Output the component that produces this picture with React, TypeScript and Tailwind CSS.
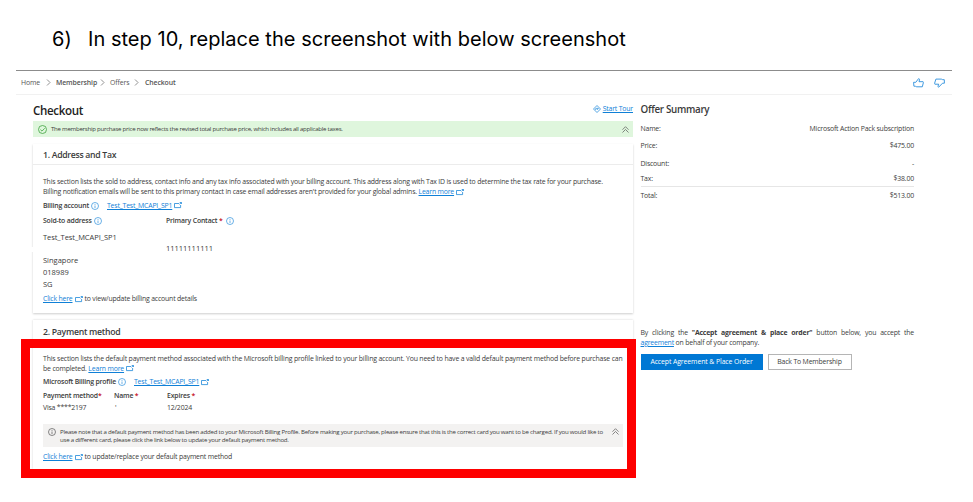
import type { ReactNode } from "react";

type Kids = { children?: ReactNode; className?: string };

function Row({ children, className = "" }: Kids) {
  return <div className={`flex items-center whitespace-nowrap ${className}`}>{children}</div>;
}

function Link({ children, className = "" }: Kids) {
  return <a className={`text-[#0f80d7] underline decoration-[0.6px] underline-offset-1 ${className}`}>{children}</a>;
}

function Chevron() {
  return (
    <svg className="h-[7px] w-[5px]" viewBox="0 0 5 7" fill="none" stroke="#777" strokeWidth="0.8">
      <path d="M1 0.5 4 3.5 1 6.5" />
    </svg>
  );
}

function DoubleUp({ className = "" }: Kids) {
  return (
    <svg className={`h-[7px] w-[7px] shrink-0 ${className}`} viewBox="0 0 7 7" fill="none" stroke="#555" strokeWidth="0.7">
      <path d="M0.5 3.7 3.5 0.7 6.5 3.7M0.5 6.5 3.5 3.5 6.5 6.5" />
    </svg>
  );
}

function Info({ className = "", stroke = "#2b8fdc" }: { className?: string; stroke?: string }) {
  return (
    <svg className={`h-2 w-2 shrink-0 ${className}`} viewBox="0 0 8 8" fill="none" stroke={stroke} strokeWidth="0.7">
      <circle cx="4" cy="4" r="3.5" />
      <path d="M4 3.5V6M4 2V2.8" />
    </svg>
  );
}

function External({ className = "" }: Kids) {
  return (
    <svg className={`inline-block h-[7px] w-2 shrink-0 ${className}`} viewBox="0 0 8 7" fill="none" stroke="#0f80d7" strokeWidth="0.75">
      <path d="M5 1.5H0.5V5.6H6.6V3M5.4 2.3 7.3 0.7M5.7 0.5H7.5V2" />
    </svg>
  );
}

function Star() {
  return <span className="text-[#c50f1f]">*</span>;
}

function SummaryRow({ label, value, className }: { label: string; value: string; className: string }) {
  return (
    <Row className={`justify-between ${className}`}>
      <span>{label}</span>
      <span>{value}</span>
    </Row>
  );
}

export default function App() {
  return (
    <div className="relative h-[502px] w-[973px] overflow-hidden bg-white font-['Open_Sans','Noto_Sans',sans-serif] text-[6.9px] leading-[10px] tracking-[-0.18px] text-[#3b3b3b]">
      <Row className="h-[70px] pt-2 pl-[52px] font-['Inter','Liberation_Sans',sans-serif] text-[20px] leading-6 tracking-[0.03px] text-black">
        <span className="w-9">6)</span>
        <span>In step 10, replace the screenshot with below screenshot</span>
      </Row>

      <div className="ml-4 w-[936px]">
        <Row className="h-[25px] justify-between border-t border-b border-t-[#8c8c8c] border-b-[#f1f1f1] pr-[7px] pl-[5px] tracking-[-0.1px] text-[#555]">
          <Row>
            <span className="w-[25px]">Home</span>
            <Chevron />
            <span className="ml-[5px] w-[44px] font-semibold">Membership</span>
            <Chevron />
            <span className="ml-[5px] w-6">Offers</span>
            <Chevron />
            <span className="ml-[6px] font-semibold">Checkout</span>
          </Row>
          <Row className="gap-2.5">
            <svg className="h-[10px] w-[11px]" viewBox="0 0 11 10" fill="none" stroke="#2b8fdc" strokeWidth="0.9" strokeLinejoin="round">
              <path d="M0.6 4.3H2.8L5.6 0.6 6.6 1.3 6 3.7H10.1L10.4 4.6 9.3 8.8H3.2L2.6 8.2H0.9Z" />
            </svg>
            <svg className="h-[10px] w-[11px]" viewBox="0 0 11 10" fill="none" stroke="#2b8fdc" strokeWidth="0.9" strokeLinejoin="round">
              <path d="M10.4 5.2H8.5L4.7 9.2 3.9 8.6 4.7 6.2H0.9L0.6 5.3 1.9 1.1H7.8L8.4 1.7H10.3Z" />
            </svg>
          </Row>
        </Row>
      </div>

      <div className="flex pl-[33px]">
        <main className="w-[600px]">
          <Row className="h-[26px] justify-between pt-1">
            <h1 className="pt-0.5 text-[11.6px] font-semibold tracking-[-0.36px] text-[#222]">Checkout</h1>
            <Row className="-mt-0.5 gap-[2px]">
              <svg className="h-2 w-2" viewBox="0 0 8 8" fill="none" stroke="#2b8fdc" strokeWidth="0.8">
                <path d="M4 0.5 7.5 4 4 7.5 0.5 4ZM2.6 4.8V3.7H5.2M4.3 2.7 5.3 3.7 4.3 4.7" />
              </svg>
              <Link>Start Tour</Link>
            </Row>
          </Row>
          <Row className="h-4 bg-[#dff6dd] pr-1 pl-[5px] text-[6.1px] tracking-[-0.26px]">
            <svg className="mr-1 h-[9px] w-[9px]" viewBox="0 0 9 9" fill="none" stroke="#3fa33f" strokeWidth="0.8">
              <circle cx="4.5" cy="4.5" r="4" />
              <path d="M2.4 4.6 4 6.1 6.7 3.3" />
            </svg>
            <span className="flex-1">The membership purchase price now reflects the revised total purchase price, which includes all applicable taxes.</span>
            <DoubleUp />
          </Row>

          <section className="mt-[7px] h-[169px] shadow-[0_1px_2px_rgba(0,0,0,0.2)]">
            <Row className="h-[21px] border-b border-[#ececec] pt-0.5 pl-2.5">
              <h2 className="text-[8.7px] font-semibold tracking-[-0.3px]">1. Address and Tax</h2>
            </Row>
            <div className="pt-3 pl-2.5">
              <Row className="h-[10px]">This section lists the sold to address, contact info and any tax info associated with your billing account. This address along with Tax ID is used to determine the tax rate for your purchase.</Row>
              <Row className="h-[10px]">
                Billing notification emails will be sent to this primary contact in case email addresses aren't provided for your global admins.&nbsp;
                <Link>Learn more</Link>
                <External className="ml-0.5" />
              </Row>
              <Row className="mt-[3px] h-[11px]">
                <b className="w-12 font-semibold">Billing account</b>
                <Info className="mr-2" />
                <Link>Test_Test_MCAPI_SP1</Link>
                <External className="ml-0.5" />
              </Row>
              <Row className="mt-[5px] h-[10px]">
                <b className="w-[51px] font-semibold">Sold-to address</b>
                <Info className="mr-16" />
                <b className="w-[60px] font-semibold">Primary Contact <Star /></b>
                <Info />
              </Row>
              <Row className="mt-[6px] h-[10px] text-[7.5px] tracking-[-0.06px]">Test_Test_MCAPI_SP1</Row>
              <Row className="mt-px h-[10px] pl-[123px] text-[7.5px] tracking-[-0.02px]">11111111111</Row>
              <div className="mt-[1px] text-[7.5px] leading-[12px] tracking-normal">
                <p>Singapore</p>
                <p>018989</p>
                <p>SG</p>
              </div>
              <Row className="mt-[4px] h-[10px]">
                <Link>Click here</Link>
                <External className="mr-0.5 ml-0.5" />
                to view/update billing account details
              </Row>
            </div>
          </section>

          <section className="mt-[7px] h-[149px] shadow-[0_0_2px_rgba(0,0,0,0.18)]">
            <Row className="h-[21px] border-b border-[#ececec] pt-[3px] pl-2.5">
              <h2 className="text-[8.7px] font-semibold tracking-[-0.28px]">2. Payment method</h2>
            </Row>
            <div className="pt-3 pr-2.5 pl-2.5">
              <Row className="h-[10px] pt-px tracking-[-0.165px]">This section lists the default payment method associated with the Microsoft billing profile linked to your billing account. You need to have a valid default payment method before purchase can</Row>
              <Row className="h-[10px] pt-px tracking-[-0.165px]">
                be completed.&nbsp;<Link>Learn more</Link>
                <External className="ml-0.5" />
              </Row>
              <Row className="mt-[4px] h-[10px]">
                <b className="w-[75px] font-semibold">Microsoft Billing profile</b>
                <Info className="mr-2" />
                <Link>Test_Test_MCAPI_SP1</Link>
                <External className="ml-0.5" />
              </Row>
              <div className="mt-[4px] grid grid-cols-[71px_53px_60px] gap-y-[2px] whitespace-nowrap">
                <b className="font-semibold">Payment method<Star /></b>
                <b className="font-semibold">Name <Star /></b>
                <b className="font-semibold">Expires <Star /></b>
                <span>Visa ****2197</span>
                <span className="pl-px">'</span>
                <span>12/2024</span>
              </div>
              <div className="mt-[11px] flex h-[23px] bg-[#f3f2f1] pt-1 pl-[5px] text-[6.1px] leading-[8px] tracking-[-0.235px] whitespace-nowrap">
                <Info stroke="#555" className="mr-1" />
                <div className="w-[550px]">
                  <p>Please note that a default payment method has been added to your Microsoft Billing Profile. Before making your purchase, please ensure that this is the correct card you want to be charged. If you would like to</p>
                  <p>use a different card, please click the link below to update your default payment method.</p>
                </div>
                <DoubleUp className="ml-0.5" />
              </div>
              <Row className="mt-[5px] h-[10px]">
                <Link>Click here</Link>
                <External className="mr-0.5 ml-0.5" />
                to update/replace your default payment method
              </Row>
            </div>
          </section>
        </main>

        <aside className="ml-[7.5px] w-[273.5px]">
          <Row className="h-[26px] pt-[3px]">
            <h2 className="text-[9.8px] font-semibold tracking-[-0.3px]">Offer Summary</h2>
          </Row>
          <SummaryRow label="Name:" value="Microsoft Action Pack subscription" className="mt-[3px] h-[10px]" />
          <SummaryRow label="Price:" value="$475.00" className="mt-[7px] h-[10px]" />
          <SummaryRow label="Discount:" value="-" className="mt-2 h-[10px]" />
          <SummaryRow label="Tax:" value="$38.00" className="mt-[5px] h-[10px]" />
          <SummaryRow label="Total:" value="$513.00" className="mt-[2px] h-[15px] border-t border-[#e6e6e6] pt-1" />
          <p className="mt-[127px] text-justify">
            By clicking the <b className="font-bold">"Accept agreement &amp; place order"</b> button below, you accept the <Link>agreement</Link> on behalf of your company.
          </p>
          <div className="mt-[6px] flex gap-[5px]">
            <button className="h-4 w-[122px] bg-[#0078d4] tracking-[-0.1px] text-white">Accept Agreement &amp; Place Order</button>
            <button className="h-4 w-[84px] border border-[#b5b5b5] bg-white tracking-[-0.17px]">Back To Membership</button>
          </div>
        </aside>
      </div>

      <div className="absolute top-[247px] left-[22px] h-[5px] w-10 bg-white" />
      <div className="absolute top-[339px] left-[21px] h-[139px] w-[615px] border-9 border-[#fe0000]" />
    </div>
  );
}
